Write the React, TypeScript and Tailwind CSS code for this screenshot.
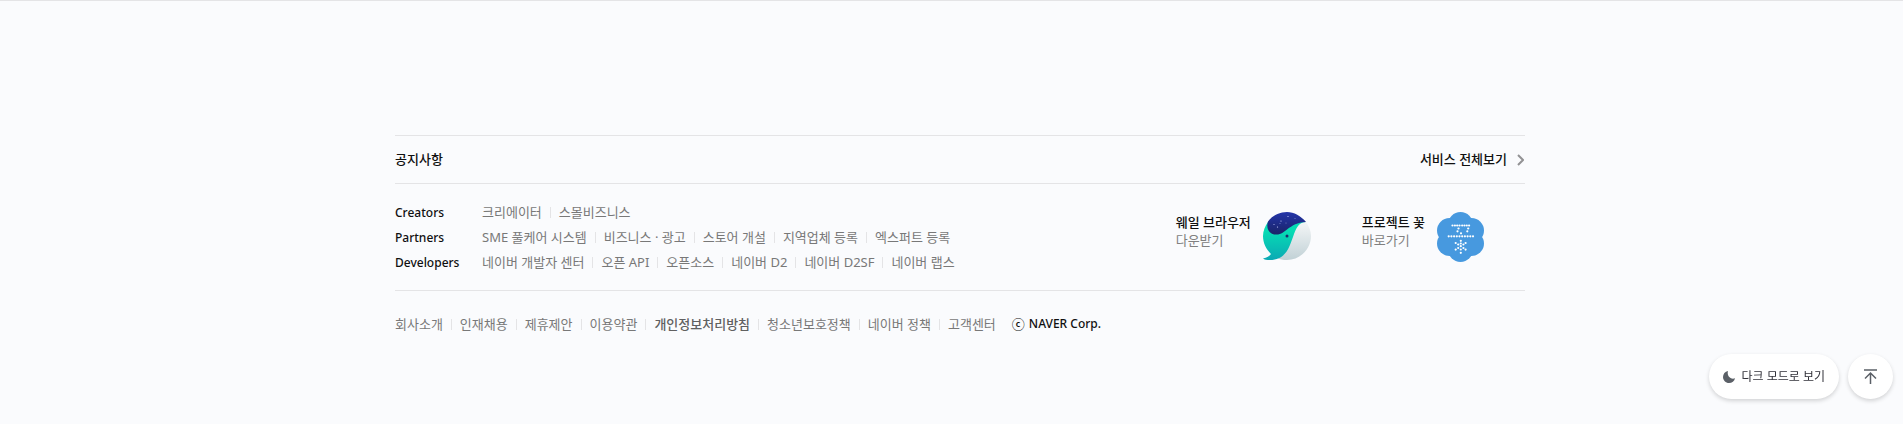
import React from "react";

type Item = { label: string; strong?: boolean };

const groups: { title: string; items: Item[] }[] = [
  { title: "Creators", items: [{ label: "크리에이터" }, { label: "스몰비즈니스" }] },
  {
    title: "Partners",
    items: [
      { label: "SME 풀케어 시스템" },
      { label: "비즈니스 · 광고" },
      { label: "스토어 개설" },
      { label: "지역업체 등록" },
      { label: "엑스퍼트 등록" },
    ],
  },
  {
    title: "Developers",
    items: [
      { label: "네이버 개발자 센터" },
      { label: "오픈 API" },
      { label: "오픈소스" },
      { label: "네이버 D2" },
      { label: "네이버 D2SF" },
      { label: "네이버 랩스" },
    ],
  },
];

const corporate: Item[] = [
  { label: "회사소개" },
  { label: "인재채용" },
  { label: "제휴제안" },
  { label: "이용약관" },
  { label: "개인정보처리방침", strong: true },
  { label: "청소년보호정책" },
  { label: "네이버 정책" },
  { label: "고객센터" },
];

function LinkList({ items }: { items: Item[] }) {
  return (
    <ul className="flex items-center">
      {items.map((item, i) => (
        <li key={item.label} className="flex items-center">
          {i > 0 && <span className="mx-2 h-[11px] w-px bg-[#e4e4e6]" />}
          <a href="#" className={item.strong ? "font-medium text-[#606060]" : ""}>
            {item.label}
          </a>
        </li>
      ))}
    </ul>
  );
}

function WhaleIcon() {
  return (
    <svg className="size-12" viewBox="0 0 48 48" aria-hidden="true">
      <defs>
        <linearGradient id="body" x1="0" y1="0" x2="0" y2="1">
          <stop offset="0.3" stopColor="#06dcb4" />
          <stop offset="1" stopColor="#0ba9b4" />
        </linearGradient>
        <linearGradient id="belly" x1="0" y1="0" x2="0" y2="1">
          <stop offset="0" stopColor="#f4f6f7" />
          <stop offset="1" stopColor="#c1d1d6" />
        </linearGradient>
        <linearGradient id="sky" x1="0" y1="0" x2="0" y2="1">
          <stop offset="0" stopColor="#2334a8" />
          <stop offset="1" stopColor="#1a2468" />
        </linearGradient>
      </defs>
      <path d="M43 10C46 14 48 19 48 24C48 37 37 48 24 48C20 48 17 47.500 14 46L30 20C33 12 38 10 43 10Z" fill="url(#belly)" />
      <path d="M43 10C37 10 34 14 31 22C27 33 24 48 7 48C4 48 1 47.500 0 46.500C4 46 6.500 44 8 42C3 37 0 31 0 24C0 19 2 14 5 10L24 6Z" fill="url(#body)" />
      <path d="M43 10C38 4 31 0 24 0C16 0 9 4 5 9.500C3 15 5 22.500 13 22.500C23 23 25 11 43 10Z" fill="url(#sky)" />
      <circle cx="24" cy="24" r="1.500" fill="#1b2a6b" />
      <g fill="#c9d2ff">
        <circle cx="25" cy="4.500" r=".6" />
        <circle cx="32" cy="6.500" r=".4" />
        <circle cx="18" cy="9" r=".6" />
        <circle cx="17" cy="11.500" r=".4" />
        <circle cx="23" cy="11" r=".4" />
        <circle cx="11" cy="12.500" r=".5" />
        <circle cx="14.500" cy="15" r=".6" />
      </g>
    </svg>
  );
}

const flowerDots: [number, number][] = [
  [15.5, 13.5], [17.9, 13.5], [20.2, 13.5], [22.5, 13.5],
  [25.2, 13.5], [27.5, 13.5], [29.8, 13.5], [32.1, 13.5],
  [21.5, 16.5], [20.5, 19.3], [31.2, 16.5], [30.3, 19.3], [24, 21.3],
  [11.7, 24.3], [14.4, 24.3], [17.1, 24.3], [19.8, 24.3], [22.5, 24.3],
  [25.2, 24.3], [27.9, 24.3], [30.6, 24.3], [33.3, 24.3], [36, 24.3],
  [23.8, 28.8], [23.8, 31.5], [23.8, 34.2], [23.8, 37.5], [23.8, 40.8],
  [18.7, 31], [21.2, 32.5], [28.6, 31], [26.4, 32.5],
  [18.7, 37.6], [21.2, 36], [28.6, 37.6], [26.4, 36],
];

function FlowerIcon() {
  return (
    <svg className="h-[50px] w-[47px]" viewBox="0 0 47 50" aria-hidden="true">
      <g fill="#4799df">
        <circle cx="23.500" cy="25" r="18" />
        <circle cx="23.500" cy="12.500" r="12.500" />
        <circle cx="23.500" cy="37.500" r="12.500" />
        <circle cx="12.500" cy="18.500" r="12.500" />
        <circle cx="34.500" cy="18.500" r="12.500" />
        <circle cx="12.500" cy="31.500" r="12.500" />
        <circle cx="34.500" cy="31.500" r="12.500" />
      </g>
      <g fill="#fff">
        {flowerDots.map(([x, y]) => (
          <circle key={`${x}-${y}`} cx={x} cy={y} r="1.100" />
        ))}
      </g>
    </svg>
  );
}

function Banner({ title, action, children }: { title: string; action: string; children: React.ReactNode }) {
  return (
    <a href="#" className="flex items-start gap-3">
      <span className="flex flex-col pt-px leading-[18px]">
        <strong className="font-medium text-[#101010]">{title}</strong>
        <span className="text-[#808080]">{action}</span>
      </span>
      {children}
    </a>
  );
}

export default function App() {
  return (
    <div className="min-h-screen border-t border-[#e4e4e6] bg-[#fafbfd] font-['Noto_Sans','Noto_Sans_CJK_KR',sans-serif] text-[13px] text-[#787878]">
      <footer className="mx-auto w-full max-w-[1147px] pt-[134px] pl-[17px]">
        <div className="flex h-12 items-center justify-between border-t border-[#e4e4e6] font-medium text-[#101010]">
          <a href="#">공지사항</a>
          <a href="#" className="flex items-center gap-[10px] pr-px">
            서비스 전체보기
            <svg className="h-3 w-[7px]" viewBox="0 0 7 12" fill="none" stroke="#929294" strokeWidth="2" aria-hidden="true">
              <path d="M1 1L6 6L1 11" />
            </svg>
          </a>
        </div>
        <div className="flex items-start justify-between border-y border-[#e4e4e6] pt-4 pb-[15px]">
          <div className="leading-[25px]">
            {groups.map((group) => (
              <div key={group.title} className="flex">
                <h3 className="w-[87px] text-[12px] font-medium text-[#101010]">{group.title}</h3>
                <LinkList items={group.items} />
              </div>
            ))}
          </div>
          <div className="flex gap-[51px] pt-3 pr-[41px]">
            <Banner title="웨일 브라우저" action="다운받기">
              <WhaleIcon />
            </Banner>
            <Banner title="프로젝트 꽃" action="바로가기">
              <FlowerIcon />
            </Banner>
          </div>
        </div>
        <div className="flex items-center gap-4 py-6 leading-[18px]">
          <LinkList items={corporate} />
          <a href="#" className="flex items-center gap-1 font-medium text-[#101010]">
            <span>ⓒ</span>
            <span className="text-[12px]">NAVER Corp.</span>
          </a>
        </div>
      </footer>
      <div className="fixed right-[10px] bottom-[25px] flex gap-[9px]">
        <button type="button" className="flex h-[45px] items-center gap-[6px] rounded-full bg-white px-[14px] text-[12px] text-[#303038] shadow-[0_2px_4px_rgba(0,0,0,0.16)]">
          <svg className="size-3" viewBox="0 0 12 12" fill="#5b6067" aria-hidden="true">
            <path d="M5 0C2 .600 0 3 0 6C0 9.300 2.700 12 6 12C9 12 11.500 10 12 7.200C8 9 3.500 5 5 0Z" />
          </svg>
          다크 모드로 보기
        </button>
        <button type="button" aria-label="맨 위로" className="flex size-[45px] items-center justify-center rounded-full bg-white shadow-[0_2px_4px_rgba(0,0,0,0.16)]">
          <svg className="h-[15px] w-[13px]" viewBox="0 0 13 15" fill="none" stroke="#5b6067" strokeWidth="1.500" aria-hidden="true">
            <path d="M0 1H13M6.500 15V4M1 9.500L6.500 4L12 9.500" />
          </svg>
        </button>
      </div>
    </div>
  );
}
